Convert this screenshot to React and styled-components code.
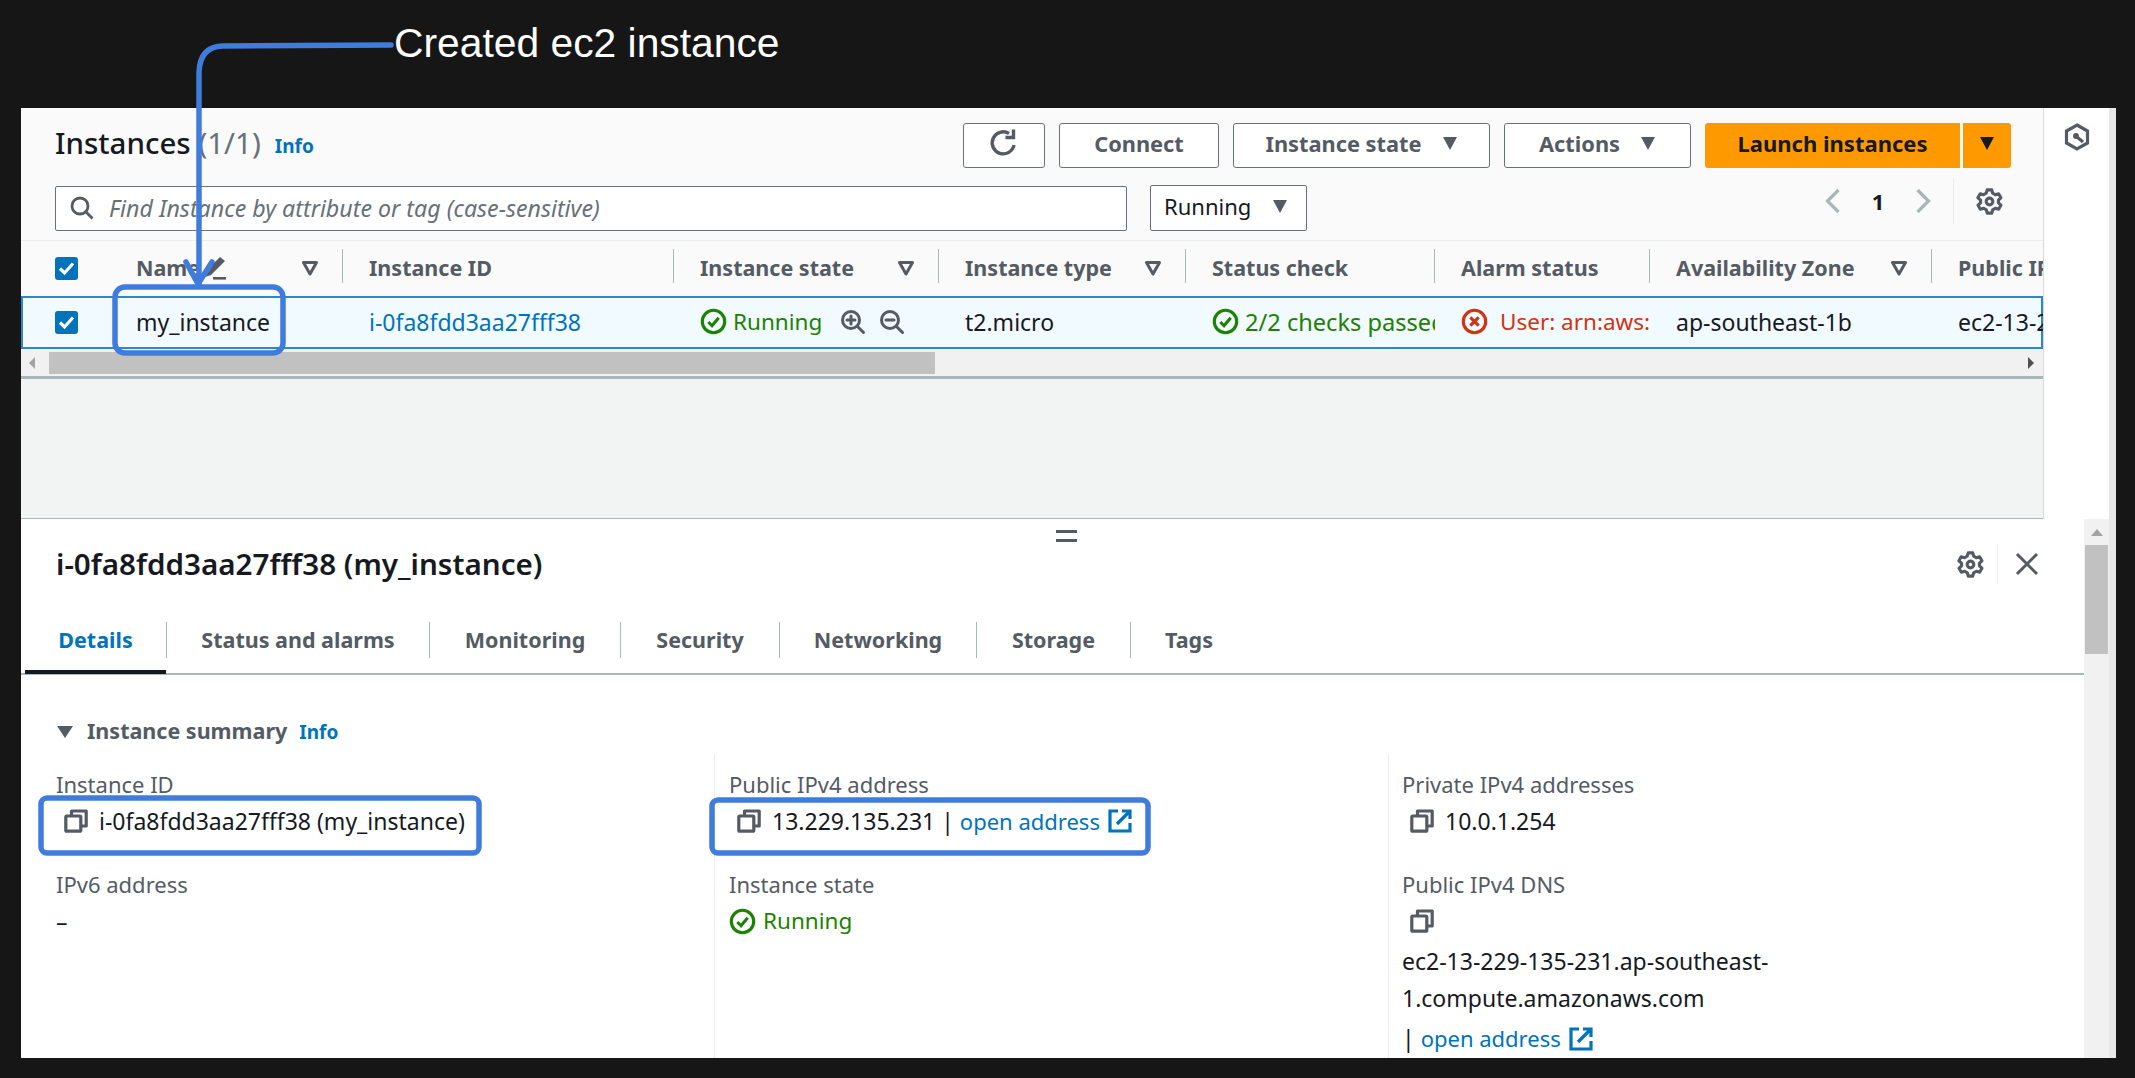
import React from 'react';
import styled, { createGlobalStyle } from 'styled-components';

const Global = createGlobalStyle`
  html, body { margin: 0; padding: 0; background: #161616; }
  body { width: 2135px; height: 1078px; overflow: hidden; font-family: "Noto Sans", "Open Sans", sans-serif; color: #16191f; }
  * { box-sizing: border-box; }
`;

const Page = styled.div`
  position: relative; width: 2135px; height: 1078px; background: #161616; overflow: hidden;
  display: flex; flex-direction: column;
`;
const CaptionBar = styled.div`
  height: 108px; padding: 19px 0 0 394px; flex: none;
  font: 40.8px/48px "Liberation Sans", Arial, sans-serif; color: #fff;
`;
const Win = styled.div`
  width: 2095px; height: 950px; margin-left: 21px; display: flex; flex-direction: column; flex: none; overflow: hidden;
`;
const TopRow = styled.div`display: flex; height: 411px; flex: none;`;
const Main = styled.div`flex: 1; min-width: 0; background: #f2f3f3; display: flex; flex-direction: column; border-bottom: 1px solid #aab7b8;`;
const Side = styled.div`
  width: 66px; flex: none; background: #fff; border-left: 1px solid #d5dbdb; display: flex; justify-content: center; padding-top: 15px; color: #545b64;
`;
const EdgeStrip = styled.div`width: 7px; flex: none; background: #e8e8e8;`;
const Toolbar = styled.div`background: #fafafa; padding: 15px 32px 0 34px; height: 133px; border-bottom: 1px solid #eaeded; flex: none;`;
const ToolRow = styled.div`display: flex; align-items: center; margin-bottom: ${p => p.$mb || 0}px;`;
const Title = styled.h1`margin: 0 0 6px; font-size: 29.5px; line-height: 39px; font-weight: 500; color: #16191f; white-space: nowrap;`;
const Count = styled.span`color: #687078; font-weight: 400;`;
const InfoLink = styled.a`font-size: 19px; font-weight: 700; color: #0073bb; margin-left: 14px; position: relative; top: 0;`;
const Actions = styled.div`margin-left: auto; display: flex; gap: 14px;`;
const Btn = styled.button`
  width: ${p => p.$w}px; height: 45px; background: #fff; border: 1.5px solid #687078; border-radius: 3px;
  font: 700 21.8px "Noto Sans", sans-serif; color: #545b64; display: flex; align-items: center; justify-content: center; gap: 20px; padding: 0 0 5px;
`;
const SplitBtn = styled.div`display: flex; height: 45px; gap: 3px;`;
const Primary = styled.button`
  width: ${p => p.$w}px; height: 45px; background: #ff9900; border: 0; border-radius: ${p => p.$r}; padding: 0 0 5px;
  font: 700 22px "Noto Sans", sans-serif; color: #16191f; display: flex; align-items: center; justify-content: center;
`;
const SearchBox = styled.div`
  width: 1072px; height: 45px; background: #fff; border: 1.5px solid #687078; border-radius: 2px;
  display: flex; align-items: center; gap: 14px; padding-left: 13px;
  font-size: 23.2px; font-style: italic; color: #687078; white-space: nowrap;
`;
const Select = styled.div`
  width: 157px; height: 46px; margin-left: 23px; background: #fff; border: 1.5px solid #687078; border-radius: 2px;
  display: flex; align-items: center; justify-content: space-between; padding: 0 18px 5px 13px; font-size: 22px; color: #16191f;
`;
const Pager = styled.div`margin-left: auto; margin-right: 8px; display: flex; align-items: center; height: 46px; position: relative; top: -7px; color: #16191f;`;
const PageNum = styled.span`width: 74px; text-align: center; font-size: 22px; font-weight: 700;`;
const PagerSep = styled.span`width: 1px; height: 46px; background: #eaeded; margin: 0 22px;`;

const cols = '89px 233px 331px 265px 247px 249px 215px 282px 200px';
const THead = styled.div`display: grid; grid-template-columns: ${cols}; height: 55px; background: #fafafa; flex: none; overflow: hidden;`;
const TH = styled.div`
  display: flex; align-items: center; justify-content: space-between; padding: 0 ${p => p.$pr ?? 24}px 2px 26px;
  font-size: 21.5px; font-weight: 700; color: #545b64; white-space: nowrap; position: relative;
  ${p => p.$sep && `&::after { content: ""; position: absolute; right: 0; top: 8px; bottom: 13px; width: 1.5px; background: ${p.$sep}; }`}
`;
const NameWrap = styled.span`display: flex; align-items: center; gap: 3px;`;
const TRow = styled.div`
  display: grid; grid-template-columns: ${cols}; height: 53px; background: #f1faff; box-shadow: inset 0 0 0 2px #2d88c8; flex: none; overflow: hidden;
`;
const TD = styled.div`
  display: flex; align-items: center; gap: ${p => p.$gap ?? 6}px; padding: 0 2px 2px ${p => p.$pl ?? 26}px; font-size: 23px; white-space: nowrap; overflow: hidden;
  color: ${p => p.$c || '#16191f'};
`;
const Status = styled.span`font-size: ${p => p.$s ?? 22.5}px;`;
const ZoomGroup = styled.span`display: flex; gap: 13px; margin-left: 12px;`;
const CheckBox = styled.span`
  width: 23px; height: 23px; border-radius: 3px; background: #0073bb; display: flex; align-items: center; justify-content: center; margin-left: 34px;
`;
const CheckCell = styled.div`display: flex; align-items: center;`;
const ScrollH = styled.div`height: 27px; background: #f1f1f1; display: flex; align-items: center; flex: none; position: relative; padding-left: 28px; justify-content: space-between; padding-right: 9px;`;
const ThumbH = styled.div`width: 886px; height: 22px; background: #c1c1c1;`;
const ArrowTri = styled.span`
  width: 0; height: 0; border-style: solid; border-color: transparent;
  border-width: 6px ${p => p.$dir === 'r' ? 0 : '6px'} 6px ${p => p.$dir === 'r' ? '6px' : 0};
  ${p => p.$dir === 'r' ? 'border-left-color: #505050;' : 'border-right-color: #a3a3a3; position: absolute; left: 8px;'}
`;
const TableRule = styled.div`height: 3px; background: #aab7b8; flex: none;`;

const Bottom = styled.div`flex: 1; display: flex; min-height: 0; background: #fff;`;
const BottomMain = styled.div`flex: 1; min-width: 0; position: relative; display: flex; flex-direction: column; overflow: hidden;`;
const Handle = styled.div`
  position: absolute; left: 1035px; top: 11px; width: 21px; height: 12px; border-top: 3px solid #545b64; border-bottom: 3px solid #545b64;
`;
const PanelHead = styled.div`height: 92px; flex: none; display: flex; align-items: flex-start; justify-content: space-between; padding: 22px 45px 0 35px;`;
const PanelTitle = styled.h2`margin: 0; font-size: 29.6px; line-height: 46px; font-weight: 600; color: #16191f;`;
const PanelTools = styled.div`display: flex; align-items: center; height: 46px; color: #545b64;`;
const ToolSep = styled.span`width: 1px; height: 40px; background: #eaeded; margin: 0 17px 0 13px;`;
const Tabs = styled.div`height: 64px; flex: none; display: flex; align-items: center; border-bottom: 2px solid #aab7b8; padding-left: 4px;`;
const Tab = styled.div`
  height: 100%; width: ${p => p.$w}px; display: flex; align-items: center; justify-content: center; font-size: 21.5px; font-weight: 700;
  color: ${p => p.$on ? '#0073bb' : '#545b64'};
  border-bottom: ${p => p.$on ? '4px solid #16191f' : '0'}; margin-bottom: ${p => p.$on ? '-1px' : '0'};
  padding-bottom: ${p => p.$on ? '2px' : '6px'};
`;
const TabSep = styled.span`width: 1px; height: 36px; background: #aab7b8; flex: none; margin-bottom: 4px;`;
const SummaryHead = styled.div`height: 79px; flex: none; display: flex; align-items: flex-start; padding: 42px 0 0 36px; font-size: 21.5px; font-weight: 700; color: #545b64; line-height: 28px;`;
const SummaryCaret = styled.span`width: 0; height: 0; border-style: solid; border-width: 12px 8px 0; border-color: #545b64 transparent transparent; margin: 9px 14px 0 0;`;
const SummaryInfo = styled(InfoLink)`margin-left: 12px; top: 1px;`;
const Grid = styled.div`display: grid; grid-template-columns: 693px 674px 1fr; flex: 1; min-height: 0;`;
const Col = styled.div`
  padding: 16px 0 0 ${p => p.$pl}px; ${p => p.$line && 'border-left: 1px solid #eaeded;'}
  display: flex; flex-direction: column; gap: 35px; overflow: hidden;
`;
const Field = styled.div`display: flex; flex-direction: column; gap: 9px;`;
const Label = styled.div`font-size: 22px; line-height: 28px; color: #545b64;`;
const Value = styled.div`font-size: 23px; line-height: 28px; display: flex; align-items: center; gap: ${p => p.$gap ?? 11}px; color: ${p => p.$c || '#16191f'}; padding-left: ${p => p.$pl ?? 0}px; margin-top: ${p => p.$mt ?? 0}px; white-space: nowrap;`;
const Link = styled.a`color: #0073bb; font-size: 22px; display: inline-flex; align-items: center; gap: 8px; vertical-align: top;`;
const Dns = styled.div`font-size: 23px; line-height: 37px; margin-top: 1px; color: #16191f; width: 430px;`;
const DnsLink = styled.div`margin-top: 3px;`;
const ScrollV = styled.div`width: 25px; flex: none; background: #f1f1f1; display: flex; flex-direction: column; align-items: center; padding-top: 10px;`;
const UpTri = styled.span`width: 0; height: 0; border-style: solid; border-width: 0 6px 7px; border-color: transparent transparent #a3a3a3;`;
const ThumbV = styled.div`width: 23px; height: 109px; background: #c1c1c1; margin-top: 9px;`;
const Overlay = styled.svg`position: absolute; left: 0; top: 0; pointer-events: none;`;

const Icon = styled.svg`display: block; flex: none;`;
const Caret = ({ c = '#545b64', s = 16 }) => <Icon width={s} height={s} viewBox="0 0 16 16"><path d="M1 2h14L8 15z" fill={c} /></Icon>;
const SortIcon = () => <Icon width={18} height={16} viewBox="0 0 18 16"><path d="M2.5 2.5h13L9 14z" fill="none" stroke="#545b64" strokeWidth="3" strokeLinejoin="round" /></Icon>;
const OkIcon = ({ s = 27 }) => (
  <Icon width={s} height={s} viewBox="0 0 26 26"><circle cx="13" cy="13" r="10.8" fill="none" stroke="#1d8102" strokeWidth="3" /><path d="M8 13.5l3.6 3.6L18 9.5" fill="none" stroke="#1d8102" strokeWidth="3" /></Icon>
);
const ErrIcon = () => (
  <Icon width={27} height={27} viewBox="0 0 26 26"><circle cx="13" cy="13" r="10.8" fill="none" stroke="#d13212" strokeWidth="3" /><path d="M9 9l8 8M17 9l-8 8" stroke="#d13212" strokeWidth="3" /></Icon>
);
const CopyIcon = () => (
  <Icon width={24} height={24} viewBox="0 0 24 24" fill="none" stroke="#545b64" strokeWidth="3.2" strokeLinejoin="round"><rect x="1.8" y="7" width="15" height="15.2" rx="1" /><path d="M7.5 7V2h14.7v15h-5.7" /></Icon>
);
const ExtIcon = () => (
  <Icon width={24} height={24} viewBox="0 0 24 24" fill="none" stroke="#0073bb" strokeWidth="3.2"><path d="M10 2H2v20h20v-8" /><path d="M14 2h8v8M22 2L9 15" /></Icon>
);
const Gear = ({ s = 27 }) => (
  <Icon width={s} height={s} viewBox="0 0 26 26" fill="none" stroke="#545b64" strokeWidth="3" strokeLinejoin="round">
    <path d="M10.8 1.8h4.4l.8 3.2 2.6 1.5 3.2-.9 2.2 3.8-2.4 2.3v2.6l2.4 2.3-2.2 3.8-3.2-.9-2.6 1.5-.8 3.2h-4.4l-.8-3.2-2.6-1.5-3.2.9-2.2-3.8 2.4-2.3v-2.6L1.8 9.4 4 5.6l3.2.9L9.8 5z" />
    <circle cx="13" cy="13" r="3.2" />
  </Icon>
);
const Refresh = () => (
  <Icon width={30} height={30} viewBox="0 0 30 30" fill="none" stroke="#545b64" strokeWidth="3.4"><path d="M25 17A11 11 0 1 1 20 5.5" /><path d="M24.5 1.5v8h-8" /></Icon>
);
const Zoom = ({ plus }) => (
  <Icon width={26} height={26} viewBox="0 0 26 26" fill="none" stroke="#545b64" strokeWidth="3" strokeLinecap="round"><circle cx="11" cy="11" r="8.5" /><path d="M17.5 17.5l6 6" /><path d="M7 11h8" />{plus && <path d="M11 7v8" />}</Icon>
);
const Pencil = () => (
  <Icon width={24} height={24} viewBox="0 0 24 24" fill="#545b64"><path d="M17 1l5 4L8 19l-6 2 1-6z" /><rect x="10" y="21" width="13" height="2.6" /></Icon>
);
const Chevron = ({ right }) => (
  <Icon width={16} height={26} viewBox="0 0 16 26" fill="none" stroke="#aab7b8" strokeWidth="3.2"><path d={right ? 'M2.5 2l11 11-11 11' : 'M13.5 2l-11 11 11 11'} /></Icon>
);
const Mag = () => (
  <Icon width={26} height={26} viewBox="0 0 26 26" fill="none" stroke="#545b64" strokeWidth="2.8"><circle cx="11" cy="11" r="8" /><path d="M16.5 16.5l7 7" /></Icon>
);
const Tick = () => <Icon width={17} height={15} viewBox="0 0 17 15"><path d="M2 7.5l4.5 4.5L15 2.5" fill="none" stroke="#fff" strokeWidth="3.2" /></Icon>;
const SideLogo = () => (
  <Icon width={26} height={28} viewBox="0 0 26 28" fill="none" stroke="#545b64" strokeWidth="3.2"><path d="M13 2l10.5 6v12L13 26 2.5 20V8z" /><circle cx="12" cy="13" r="2.2" fill="#545b64" strokeWidth="1.5" /><path d="M13 14l6 5" /></Icon>
);

const tabs = [['Details', 141, true], ['Status and alarms', 262], ['Monitoring', 190], ['Security', 158], ['Networking', 196], ['Storage', 153], ['Tags', 116]];

export default function App() {
  return (
    <Page>
      <Global />
      <CaptionBar>Created ec2 instance</CaptionBar>
      <Win>
        <TopRow>
          <Main>
            <Toolbar>
              <ToolRow $mb={17}>
                <Title>Instances <Count>(1/1)</Count></Title>
                <InfoLink>Info</InfoLink>
                <Actions>
                  <Btn $w={82} aria-label="Refresh"><Refresh /></Btn>
                  <Btn $w={160}>Connect</Btn>
                  <Btn $w={257}>Instance state <Caret /></Btn>
                  <Btn $w={187}>Actions <Caret /></Btn>
                  <SplitBtn>
                    <Primary $w={255} $r="3px 0 0 3px">Launch instances</Primary>
                    <Primary $w={48} $r="0 3px 3px 0"><Caret c="#16191f" /></Primary>
                  </SplitBtn>
                </Actions>
              </ToolRow>
              <ToolRow>
                <SearchBox><Mag />Find Instance by attribute or tag (case-sensitive)</SearchBox>
                <Select>Running <Caret /></Select>
                <Pager>
                  <Chevron />
                  <PageNum>1</PageNum>
                  <Chevron right />
                  <PagerSep />
                  <Gear />
                </Pager>
              </ToolRow>
            </Toolbar>
            <THead>
              <CheckCell><CheckBox><Tick /></CheckBox></CheckCell>
              <TH $sep="#aab7b8"><NameWrap>Name<Pencil /></NameWrap><SortIcon /></TH>
              <TH $sep="#aab7b8">Instance ID</TH>
              <TH $sep="#aab7b8">Instance state<SortIcon /></TH>
              <TH $sep="#aab7b8">Instance type<SortIcon /></TH>
              <TH $sep="#aab7b8">Status check</TH>
              <TH $sep="#aab7b8">Alarm status</TH>
              <TH $sep="#aab7b8">Availability Zone<SortIcon /></TH>
              <TH $pr={0}>Public IPv4 DNS</TH>
            </THead>
            <TRow>
              <CheckCell><CheckBox><Tick /></CheckBox></CheckCell>
              <TD>my_instance</TD>
              <TD $c="#0073bb">i-0fa8fdd3aa27fff38</TD>
              <TD $c="#1d8102"><OkIcon /><Status>Running</Status><ZoomGroup><Zoom plus /><Zoom /></ZoomGroup></TD>
              <TD>t2.micro</TD>
              <TD $c="#1d8102"><OkIcon /><Status $s={23.6}>2/2 checks passed</Status></TD>
              <TD $c="#d13212" $gap={12}><ErrIcon /><Status>User: arn:aws:iam::</Status></TD>
              <TD>ap-southeast-1b</TD>
              <TD>ec2-13-229-135-231</TD>
            </TRow>
            <ScrollH><ArrowTri /><ThumbH /><ArrowTri $dir="r" /></ScrollH>
            <TableRule />
          </Main>
          <Side><SideLogo /></Side>
          <EdgeStrip />
        </TopRow>
        <Bottom>
          <BottomMain>
            <Handle />
            <PanelHead>
              <PanelTitle>i-0fa8fdd3aa27fff38 (my_instance)</PanelTitle>
              <PanelTools>
                <Gear />
                <ToolSep />
                <Icon width={24} height={24} viewBox="0 0 24 24" stroke="#545b64" strokeWidth="3"><path d="M2 2l20 20M22 2L2 22" /></Icon>
              </PanelTools>
            </PanelHead>
            <Tabs>
              {tabs.map(([t, w, on], i) => (
                <React.Fragment key={t}>
                  <Tab $w={w} $on={on}>{t}</Tab>
                  {i < tabs.length - 1 && <TabSep />}
                </React.Fragment>
              ))}
            </Tabs>
            <SummaryHead><SummaryCaret />Instance summary<SummaryInfo>Info</SummaryInfo></SummaryHead>
            <Grid>
              <Col $pl={35}>
                <Field><Label>Instance ID</Label><Value $pl={8}><CopyIcon />i-0fa8fdd3aa27fff38 (my_instance)</Value></Field>
                <Field><Label>IPv6 address</Label><Value>–</Value></Field>
              </Col>
              <Col $pl={14} $line>
                <Field><Label>Public IPv4 address</Label><Value $pl={8}><CopyIcon /><span>13.229.135.231 | <Link>open address <ExtIcon /></Link></span></Value></Field>
                <Field><Label>Instance state</Label><Value $gap={7} $c="#1d8102"><OkIcon /><Status>Running</Status></Value></Field>
              </Col>
              <Col $pl={13} $line>
                <Field><Label>Private IPv4 addresses</Label><Value $pl={8}><CopyIcon />10.0.1.254</Value></Field>
                <Field>
                  <Label>Public IPv4 DNS</Label>
                  <Value $pl={8} $mt={2}><CopyIcon /></Value>
                  <Dns>ec2-13-229-135-231.ap-southeast-<br />1.compute.amazonaws.com<DnsLink>| <Link>open address <ExtIcon /></Link></DnsLink></Dns>
                </Field>
              </Col>
            </Grid>
          </BottomMain>
          <ScrollV><UpTri /><ThumbV /></ScrollV>
          <EdgeStrip />
        </Bottom>
      </Win>
      <Overlay width="2135" height="1078" viewBox="0 0 2135 1078" fill="none" stroke="#3f7cdd" strokeWidth="5.5" strokeLinecap="round" strokeLinejoin="round">
        <path d="M391 45L222 46Q200 47 199 72L199 284" />
        <path d="M186 262L198 284L212 262" />
        <rect x="115" y="287" width="168" height="66" rx="10" />
        <rect x="41" y="798" width="438" height="55" rx="6" />
        <rect x="712" y="800" width="436" height="53" rx="6" />
      </Overlay>
    </Page>
  );
}
